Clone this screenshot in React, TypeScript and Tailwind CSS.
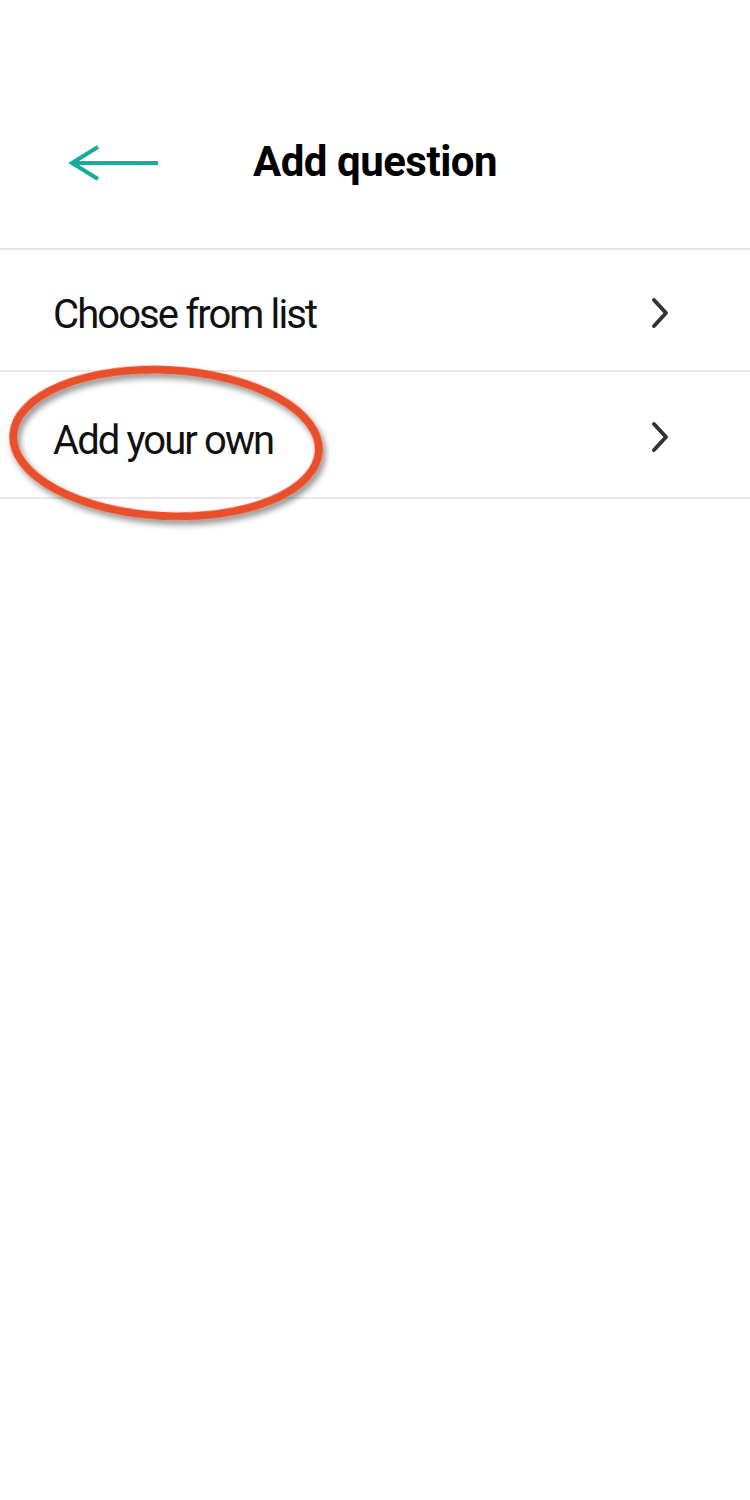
import React from "react";

function Chevron() {
  return (
    <svg width="22" height="32" viewBox="0 0 22 32" className="block">
      <path d="M5 3 L17 16 L5 29" fill="none" stroke="#333333" strokeWidth="4" strokeLinecap="round" strokeLinejoin="round" />
    </svg>
  );
}

function Row({ label, h, pt }: { label: string; h: string; pt: string }) {
  return (
    <div className={`flex items-center justify-between pl-[53px] pr-[79px] border-b-2 border-[#e8e8e8] ${h}`}>
      <span className={`text-[40px] tracking-[-1.9px] text-[#111] leading-none ${pt}`}>{label}</span>
      <div className="pt-[5px]">
        <Chevron />
      </div>
    </div>
  );
}

export default function App() {
  return (
    <div className="w-[750px] h-[1500px] bg-white relative" style={{ fontFamily: "Roboto, 'Noto Sans', sans-serif" }}>
      <div className="relative h-[250px] flex items-center justify-center border-b-2 border-[#e8e8e8] pt-[76px]">
        <button className="absolute left-[68px] top-[140px] w-[96px] h-[46px] flex items-center">
          <svg width="96" height="46" viewBox="0 0 96 46">
            <path d="M4 23 L90 23 M30 7 L4 23 L30 39" fill="none" stroke="#16ad9c" strokeWidth="4" strokeLinecap="butt" strokeLinejoin="miter" />
          </svg>
        </button>
        <h1 className="text-[42px] font-bold text-black leading-none tracking-[-0.5px]">Add question</h1>
      </div>
      <Row label="Choose from list" h="h-[122px]" pt="pt-[9px]" />
      <Row label="Add your own" h="h-[127px]" pt="pt-[13px]" />
      <svg className="absolute left-0 top-[355px] pointer-events-none" width="360" height="185" viewBox="0 0 360 185">
        <defs>
          <filter id="sh" x="-20%" y="-20%" width="140%" height="140%">
            <feDropShadow dx="3" dy="4" stdDeviation="3" floodColor="#000" floodOpacity="0.45" />
          </filter>
        </defs>
        <ellipse cx="166" cy="88" rx="153" ry="73" fill="none" stroke="#e9502a" strokeWidth="8" transform="rotate(3 166 88)" filter="url(#sh)" />
      </svg>
    </div>
  );
}
